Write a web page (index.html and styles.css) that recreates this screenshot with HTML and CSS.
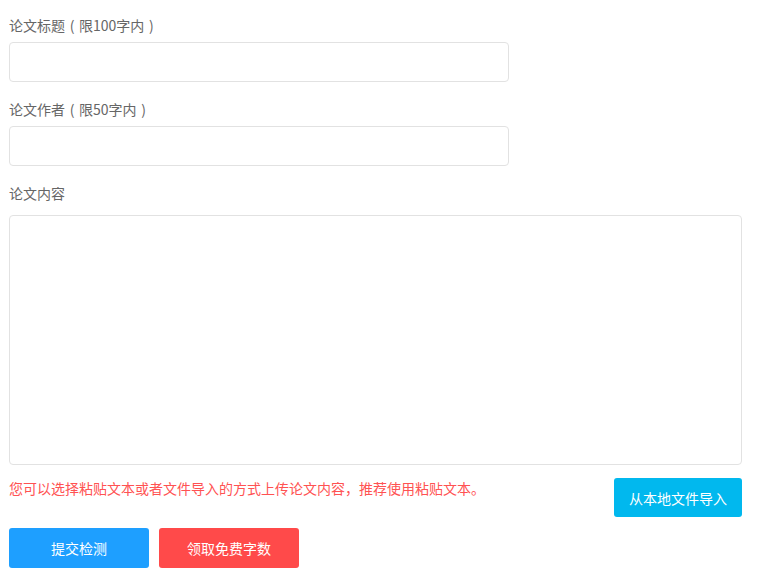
FILE: index.html
```html
<!DOCTYPE html>
<html lang="zh-CN">
<head>
    <meta charset="UTF-8">
    <title>论文检测</title>
    <link rel="stylesheet" href="styles.css">
</head>
<body>
    <div class="form">
        <div class="field">
            <label>论文标题<span class="paren">(</span>限100字内<span class="paren">)</span></label>
            <input type="text" class="input">
        </div>
        <div class="field">
            <label>论文作者<span class="paren">(</span>限50字内<span class="paren">)</span></label>
            <input type="text" class="input">
        </div>
        <div class="field content">
            <label>论文内容</label>
            <textarea class="textarea"></textarea>
        </div>

        <div class="tip-row">
            <p class="tip">您可以选择粘贴文本或者文件导入的方式上传论文内容，推荐使用粘贴文本。</p>
            <button class="btn btn-import">从本地文件导入</button>
        </div>

        <div class="actions">
            <button class="btn btn-submit">提交检测</button>
            <button class="btn btn-free">领取免费字数</button>
        </div>
    </div>
</body>
</html>
```

FILE: styles.css
```css
body {
    margin: 0;
    font-family: "Noto Sans CJK SC", "Liberation Sans", sans-serif;
    font-size: 14px;
    color: #666;
    background: #fff;
}

.form {
    width: 733px;
    padding: 15px 0 0 9px;
}

.field label {
    display: block;
    line-height: 20px;
    margin-bottom: 7px;
}

.field .paren {
    display: inline-block;
    width: 14px;
    text-align: center;
}

.field {
    margin-bottom: 17px;
}

.field.content {
    margin-bottom: 0;
}

.field.content label {
    margin-bottom: 12px;
}

.input {
    display: block;
    box-sizing: border-box;
    width: 500px;
    height: 40px;
    border: 1px solid #e2e2e2;
    border-radius: 4px;
    padding: 0 10px;
    outline: none;
}

.textarea {
    display: block;
    box-sizing: border-box;
    width: 733px;
    height: 250px;
    border: 1px solid #e2e2e2;
    border-radius: 4px;
    padding: 10px;
    resize: none;
    outline: none;
}

.tip-row {
    display: flex;
    justify-content: space-between;
    align-items: flex-start;
    margin-top: 13px;
}

.tip {
    margin: 0;
    line-height: 20px;
    color: #ff5252;
}

.btn {
    border: none;
    border-radius: 3px;
    color: #fff;
    font-family: inherit;
    font-size: 14px;
    cursor: pointer;
}

.btn-import {
    width: 128px;
    height: 39px;
    background: #01b8ee;
}

.actions {
    display: flex;
    gap: 10px;
    margin-top: 11px;
}

.btn-submit,
.btn-free {
    width: 140px;
    height: 40px;
}

.btn-submit {
    background: #1e9fff;
}

.btn-free {
    background: #ff4a4a;
}
```
